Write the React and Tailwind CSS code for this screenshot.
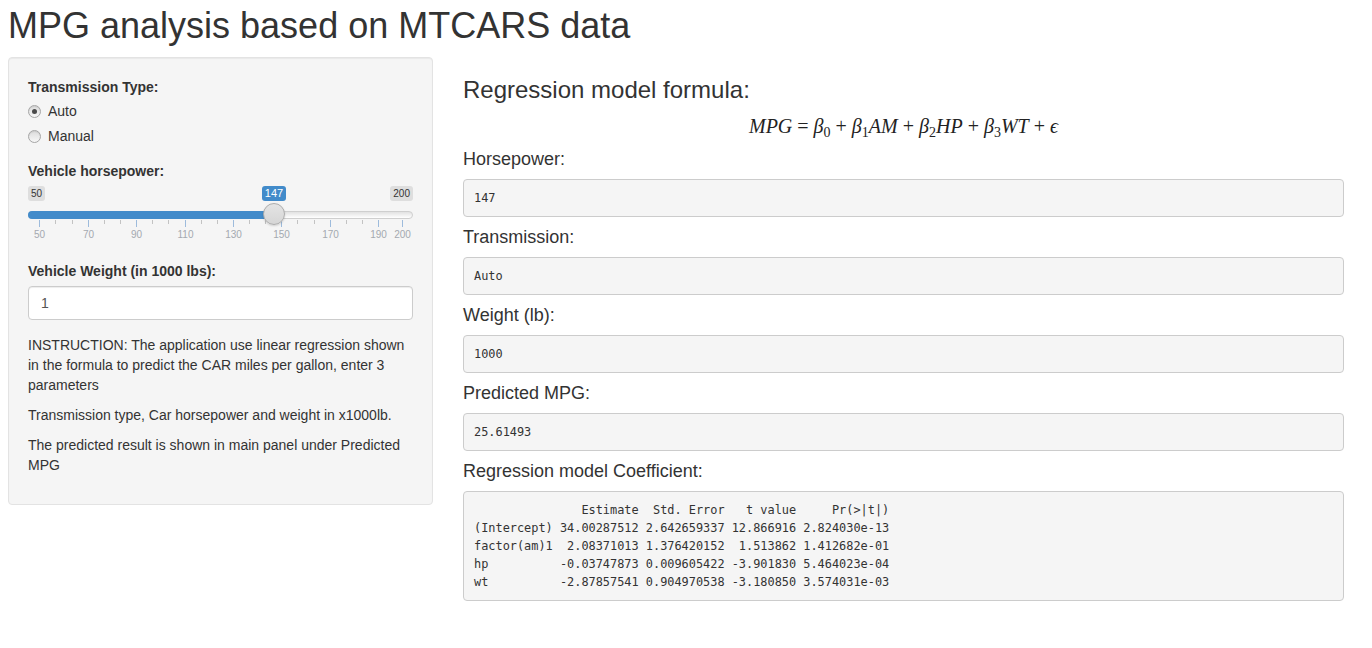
import React from "react";

const pos = (v) => 11.3 + (v - 50) * 2.42;
const majors = [50, 70, 90, 110, 130, 150, 170, 190, 200];
const minors = [];
for (let v = 50; v < 190; v += 20) {
  minors.push(v + 20 / 3, v + 40 / 3);
}

function Radio({ checked, label }) {
  return (
    <div className="flex items-center h-[20px]">
      <span className="w-[13px] h-[13px] rounded-full border border-[#a6a6a6] bg-gradient-to-b from-[#dcdcdc] to-[#f7f7f7] flex items-center justify-center shadow-[inset_0_1px_1px_rgba(0,0,0,0.08)]">
        {checked && <span className="w-[5px] h-[5px] rounded-full bg-[#4a4a4a]" />}
      </span>
      <span className="ml-[7px] text-[14px] leading-[20px] text-[#333]">{label}</span>
    </div>
  );
}

function Slider() {
  const val = 147;
  return (
    <div className="relative h-[60px] mt-[5px]">
      <div className="absolute left-0 top-[25px] w-full h-[8px] rounded-full border border-[#cfcfcf] bg-gradient-to-b from-[#e2e2e2] to-[#ffffff]" />
      <div
        className="absolute left-0 top-[25px] h-[8px] rounded-l-full bg-[#428bca]"
        style={{ width: pos(val) }}
      />
      {minors.map((v, i) => (
        <div
          key={"m" + i}
          className="absolute top-[34px] w-px h-[4px] bg-[#c3c3c3]"
          style={{ left: Math.round(pos(v)) }}
        />
      ))}
      {majors.map((v) => (
        <div
          key={"M" + v}
          className="absolute top-[34px] w-px h-[7px] bg-[#9dbbdc]"
          style={{ left: Math.round(pos(v)) }}
        />
      ))}
      {majors.map((v) => (
        <div
          key={"t" + v}
          className="absolute top-[43px] text-[10px] leading-[12px] text-[#a4a9b0] -translate-x-1/2"
          style={{ left: Math.round(pos(v)) + 0.5 }}
        >
          {v}
        </div>
      ))}
      <div className="absolute left-0 top-0 h-[15px] px-[3px] rounded-[3px] bg-[#dedede] text-[10px] leading-[15px] text-[#333]">
        50
      </div>
      <div className="absolute right-0 top-0 h-[15px] px-[3px] rounded-[3px] bg-[#dedede] text-[10px] leading-[15px] text-[#333]">
        200
      </div>
      <div
        className="absolute top-0 h-[15px] w-[24px] text-center rounded-[3px] bg-[#428bca] text-[11px] leading-[15px] text-white -translate-x-1/2"
        style={{ left: pos(val) }}
      >
        {val}
      </div>
      <div
        className="absolute top-[17px] w-[22px] h-[22px] rounded-full border border-[#acacac] bg-gradient-to-b from-[#e4e4e4] to-[#d6d6d6] shadow-[0_1px_2px_rgba(0,0,0,0.15)] -translate-x-1/2"
        style={{ left: pos(val) }}
      />
    </div>
  );
}

function Out({ title, children }) {
  return (
    <>
      <h4 className="text-[18px] leading-[20px] mt-[10px] mb-[10px] font-normal text-[#333]">{title}</h4>
      <pre className="font-['DejaVu_Sans_Mono',monospace] text-[11.9px] leading-[18px] text-[#333] bg-[#f5f5f5] border border-[#cccccc] rounded-[4px] py-[9px] pl-[10px] pr-[10px] whitespace-pre m-0">
        {children}
      </pre>
    </>
  );
}

const coef = `               Estimate  Std. Error   t value     Pr(>|t|)
(Intercept) 34.00287512 2.642659337 12.866916 2.824030e-13
factor(am)1  2.08371013 1.376420152  1.513862 1.412682e-01
hp          -0.03747873 0.009605422 -3.901830 5.464023e-04
wt          -2.87857541 0.904970538 -3.180850 3.574031e-03`;

function Formula() {
  const I = ({ children }) => <span className="italic">{children}</span>;
  const Op = ({ children }) => <span className="mx-[5px] not-italic">{children}</span>;
  const B = ({ n }) => (
    <span className="italic">
      β<sub className="not-italic text-[14px]">{n}</sub>
    </span>
  );
  return (
    <div className="h-[26px] mt-[10px] flex items-center justify-center font-['Liberation_Serif',serif] text-[20px] text-[#222]">
      <I>MPG</I>
      <Op>=</Op>
      <B n="0" />
      <Op>+</Op>
      <B n="1" />
      <I>AM</I>
      <Op>+</Op>
      <B n="2" />
      <I>HP</I>
      <Op>+</Op>
      <B n="3" />
      <I>WT</I>
      <Op>+</Op>
      <I>ϵ</I>
    </div>
  );
}

export default function App() {
  return (
    <div className="w-[1372px] min-h-[648px] bg-white font-['Liberation_Sans',Arial,sans-serif] text-[14px] text-[#333] pl-[8px] pr-[28px]">
      <h1 className="text-[36px] leading-[40px] pt-[6px] mb-[11px] font-normal text-[#333]">
        MPG analysis based on MTCARS data
      </h1>
      <div className="flex gap-[30px] items-start">
        <div className="w-[425px] shrink-0 bg-[#f5f5f5] border border-[#e3e3e3] rounded-[4px] p-[19px] shadow-[inset_0_1px_1px_rgba(0,0,0,0.05)]">
          <div className="font-bold leading-[20px] mb-[4px]">Transmission Type:</div>
          <Radio checked label="Auto" />
          <div className="mt-[5px]">
            <Radio label="Manual" />
          </div>
          <div className="font-bold leading-[20px] mt-[15px]">Vehicle horsepower:</div>
          <Slider />
          <div className="font-bold leading-[20px] mt-[15px] mb-[5px]">Vehicle Weight (in 1000 lbs):</div>
          <div className="h-[34px] bg-white border border-[#cccccc] rounded-[4px] px-[12px] flex items-center text-[14px] text-[#555] shadow-[inset_0_1px_1px_rgba(0,0,0,0.075)]">
            1
          </div>
          <p className="mt-[15px] mb-[10px] leading-[20px]">
            INSTRUCTION: The application use linear regression shown in the formula to predict the CAR miles per gallon, enter 3 parameters
          </p>
          <p className="mb-[10px] leading-[20px]">Transmission type, Car horsepower and weight in x1000lb.</p>
          <p className="mb-[10px] leading-[20px]">The predicted result is shown in main panel under Predicted MPG</p>
        </div>
        <div className="flex-1 min-w-0">
          <h3 className="text-[24px] leading-[26px] mt-[20px] font-normal text-[#333]">Regression model formula:</h3>
          <Formula />
          <Out title="Horsepower:">147</Out>
          <Out title="Transmission:">Auto</Out>
          <Out title="Weight (lb):">1000</Out>
          <Out title="Predicted MPG:">25.61493</Out>
          <Out title="Regression model Coefficient:">{coef}</Out>
        </div>
      </div>
    </div>
  );
}
